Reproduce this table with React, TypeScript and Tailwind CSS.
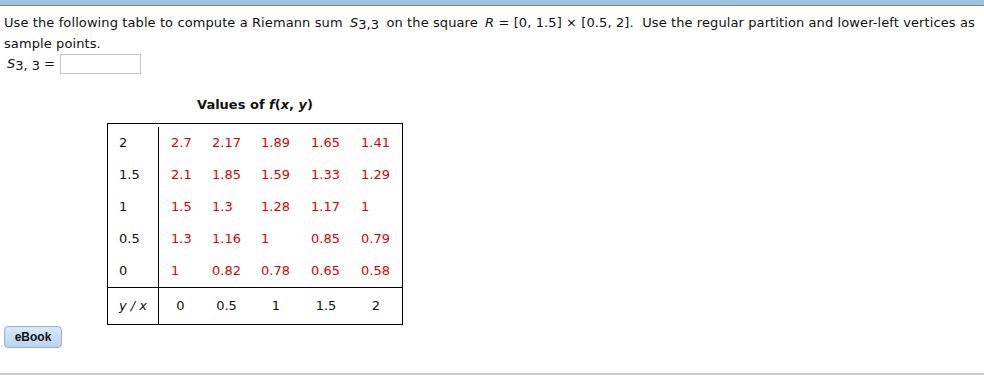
const rows: { y: string; vals: string[] }[] = [
  { y: '2', vals: ['2.7', '2.17', '1.89', '1.65', '1.41'] },
  { y: '1.5', vals: ['2.1', '1.85', '1.59', '1.33', '1.29'] },
  { y: '1', vals: ['1.5', '1.3', '1.28', '1.17', '1'] },
  { y: '0.5', vals: ['1.3', '1.16', '1', '0.85', '0.79'] },
  { y: '0', vals: ['1', '0.82', '0.78', '0.65', '0.58'] },
];

const xs = ['0', '0.5', '1', '1.5', '2'];

const grid = 'grid grid-cols-[51px_43px_49px_50px_50px_50px]';

const App = () => {
  return (
    <div className="w-[984px] h-[376px] bg-white flex flex-col text-[13px] text-[#111] font-['DejaVu_Sans',Verdana,sans-serif] overflow-hidden">
      {/* top bar */}
      <div className="h-[6px] bg-[#a0c2de] border-b border-[#6e8ba7] shrink-0"></div>

      <div className="px-[4px] pt-[6px]">
        {/* question */}
        <p className="leading-[21px] tracking-[0.1px]">
          Use the following table to compute a Riemann sum{' '}
          <span className="ml-[3px] italic">S</span>
          <span className="relative top-[2px]">3,3</span>{' '}
          <span className="ml-[3px]">on the square</span>{' '}
          <span className="ml-[3px] italic">R</span> = [0, 1.5] × [0.5, 2].&nbsp;{' '}
          Use the regular partition and lower-left vertices as sample points.
        </p>

        {/* answer row */}
        <div className="flex items-center h-[20px] pl-[3px]">
          <span className="italic">S</span>
          <span className="relative top-[2px]">3, 3</span>
          <span className="ml-[4px]">=</span>
          <input
            type="text"
            className="ml-[5px] w-[81px] h-[20px] border border-[#c6c6c6] bg-white outline-none"
          />
        </div>

        {/* table */}
        <div className="ml-[103px] w-[296px] mt-[22px]">
          <div className="text-center font-bold leading-[18px]">
            Values of <span className="italic">f</span>(<span className="italic">x</span>, <span className="italic">y</span>)
          </div>
          <div className="mt-[9px] border border-black">
            {rows.map((r, i) => (
              <div key={r.y} className={`${grid} ${i === 0 ? 'h-[35px] pt-[3px]' : 'h-[32px]'}`}>
                <div className="border-r border-black pl-[11px] flex items-center">{r.y}</div>
                {r.vals.map((v, j) => (
                  <div
                    key={j}
                    className={`${j === 0 ? 'pl-[12px]' : 'pl-[10px]'} flex items-center text-[#e00000]`}
                  >
                    {v}
                  </div>
                ))}
              </div>
            ))}
            <div className={`${grid} h-[37px] border-t border-black`}>
              <div className="border-r border-black flex items-center justify-center italic">y / x</div>
              {xs.map(x => (
                <div key={x} className="flex items-center justify-center">{x}</div>
              ))}
            </div>
          </div>
        </div>

        {/* eBook button */}
        <button className="mt-[1px] w-[58px] h-[22px] rounded-[4px] border border-[#8fb2d6] bg-gradient-to-b from-[#d9e8f8] to-[#b9d3ee] font-['Liberation_Sans',Arial,sans-serif] font-bold text-[12px] text-[#111] flex items-center justify-center">
          eBook
        </button>
      </div>

      {/* bottom rule */}
      <div className="mt-auto h-[2px] bg-[#cbcbcb] mb-[1px] shrink-0"></div>
    </div>
  );
};

export default App;
